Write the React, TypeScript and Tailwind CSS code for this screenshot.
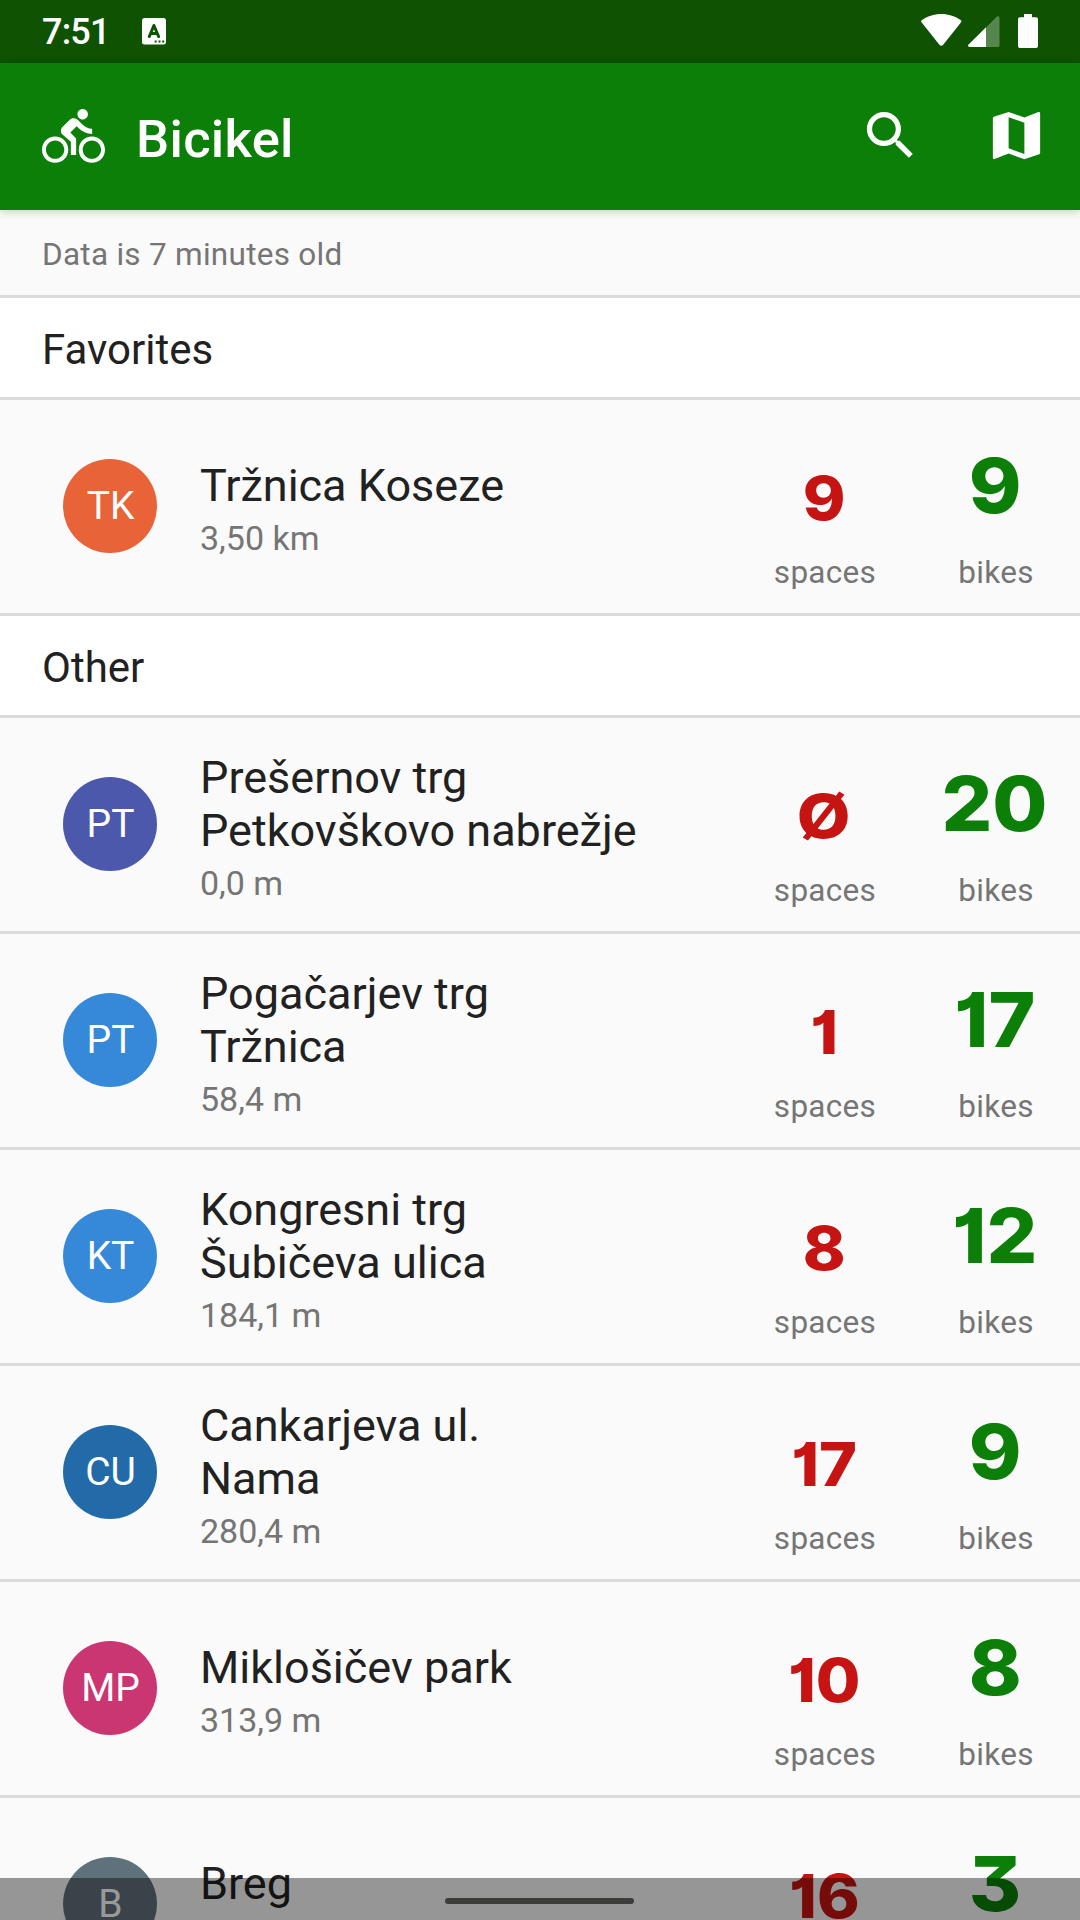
type Station = {
  initials: string;
  color: string;
  lines: string[];
  distance: string;
  spaces: string;
  bikes: string;
};

const favorites: Station[] = [
  { initials: 'TK', color: 'bg-[#e96338]', lines: ['Tržnica Koseze'], distance: '3,50 km', spaces: '9', bikes: '9' },
];

const others: Station[] = [
  { initials: 'PT', color: 'bg-[#4c58ab]', lines: ['Prešernov trg', 'Petkovškovo nabrežje'], distance: '0,0 m', spaces: 'Ø', bikes: '20' },
  { initials: 'PT', color: 'bg-[#3688d8]', lines: ['Pogačarjev trg', 'Tržnica'], distance: '58,4 m', spaces: '1', bikes: '17' },
  { initials: 'KT', color: 'bg-[#3688d8]', lines: ['Kongresni trg', 'Šubičeva ulica'], distance: '184,1 m', spaces: '8', bikes: '12' },
  { initials: 'CU', color: 'bg-[#226ba8]', lines: ['Cankarjeva ul.', 'Nama'], distance: '280,4 m', spaces: '17', bikes: '9' },
  { initials: 'MP', color: 'bg-[#ca3672]', lines: ['Miklošičev park'], distance: '313,9 m', spaces: '10', bikes: '8' },
  { initials: 'B', color: 'bg-[#5f717b]', lines: ['Breg'], distance: '402,6 m', spaces: '16', bikes: '3' },
];

function StatusBar() {
  return (
    <div className="flex h-[63px] items-start bg-[#0e5202] pl-[42px] pr-[42px] text-white">
      <span className="mt-[11px] w-[100px] text-[36px] leading-[42px] font-medium tracking-[-0.8px]">7:51</span>
      <svg className="mt-[18px] h-[27px] w-[24px]" viewBox="0 0 24 27">
        <rect width="24" height="26.5" rx="2.5" fill="#fff" />
        <path d="M7.3 18.5 11.9 7.5 16.6 18.5M8.6 15.6h6.6" fill="none" stroke="#0e5202" strokeWidth="3" strokeLinecap="round" strokeLinejoin="round" />
        <path d="M12.7 23.500h2M16.500 23.500h2M20.200 23.500h2" stroke="#0e5202" strokeWidth="2" />
      </svg>
      <div className="ml-auto flex items-start">
        <svg className="mt-[14px] h-[32px] w-[41px]" viewBox="0 0 41 32">
          <path d="M20.3 0C12.8 0 6.2 2.4 1 6.1c-1 .7-1 1.6-.3 2.5l17.700 22.200c1.100 1.400 2.700 1.400 3.800 0L39.900 8.600c.7-.9.7-1.800-.3-2.500C34.400 2.400 27.800 0 20.300 0Z" fill="#fff" />
        </svg>
        <svg className="mt-[16px] ml-[6px] h-[31px] w-[32px]" viewBox="0 0 32 31">
          <path d="M28.700.7C29.700-.3 31.500.2 31.500 2v27.500c0 .9-.6 1.500-1.500 1.500H18V11.400Z" fill="#fff" fillOpacity=".3" />
          <path d="M18 11.200V31H1.800C0 31-.5 29.700.6 28.600Z" fill="#fff" />
        </svg>
        <svg className="mt-[14px] ml-[18px] h-[34px] w-[20px]" viewBox="0 0 20 34">
          <path d="M6 0h8v3.300h4c1.200 0 2 .8 2 2V32c0 1.200-.8 2-2 2H2c-1.200 0-2-.8-2-2V5.300c0-1.200.8-2 2-2h4Z" fill="#fff" />
        </svg>
      </div>
    </div>
  );
}

function Toolbar() {
  return (
    <header className="relative z-10 flex h-[147px] items-start bg-[#0b7f08] pr-[32px] pl-[42px] text-white shadow-[0_2px_9px_rgba(0,0,0,0.18)]">
      <svg className="mt-[42px] h-[63px] w-[63px]" viewBox="0 0 24 24" fill="currentColor">
        <path d="M15.500 5.500c1.100 0 2-.9 2-2s-.9-2-2-2-2 .9-2 2 .9 2 2 2zM5 12c-2.800 0-5 2.200-5 5s2.200 5 5 5 5-2.200 5-5-2.200-5-5-5zm0 8.500c-1.900 0-3.500-1.600-3.500-3.500s1.600-3.500 3.500-3.500 3.500 1.600 3.500 3.500-1.600 3.500-3.500 3.500zm5.800-10l2.400-2.400.8.8c1.300 1.300 3 2.100 5.100 2.100V9c-1.500 0-2.700-.6-3.600-1.500l-1.900-1.900c-.5-.4-1-.6-1.600-.6s-1.100.2-1.400.6L7.800 8.400c-.4.4-.6.9-.6 1.400 0 .6.2 1.100.6 1.400L11 14v5h2v-6.200l-2.200-2.300zM19 12c-2.800 0-5 2.200-5 5s2.200 5 5 5 5-2.200 5-5-2.200-5-5-5zm0 8.500c-1.900 0-3.500-1.600-3.500-3.500s1.600-3.500 3.500-3.500 3.500 1.600 3.500 3.500-1.600 3.500-3.500 3.500z" />
      </svg>
      <h1 className="mt-[45px] ml-[31px] text-[52.5px] leading-[62px] font-medium tracking-[0.3px]">Bicikel</h1>
      <svg className="mt-[41px] ml-auto h-[63px] w-[63px]" viewBox="0 0 24 24" fill="currentColor">
        <path d="M15.500 14h-.79l-.28-.27C15.410 12.590 16 11.110 16 9.500 16 5.910 13.090 3 9.500 3S3 5.910 3 9.500 5.910 16 9.500 16c1.610 0 3.090-.59 4.230-1.570l.27.28v.79l5 4.990L20.490 19l-4.990-5zm-6 0C7.010 14 5 11.990 5 9.500S7.010 5 9.500 5 14 7.010 14 9.500 11.990 14 9.500 14z" />
      </svg>
      <svg className="mt-[41px] ml-[63px] h-[63px] w-[63px]" viewBox="0 0 24 24" fill="currentColor">
        <path d="M20.500 3l-.16.03L15 5.100 9 3 3.360 4.900c-.21.07-.36.25-.36.48V20.500c0 .28.22.5.5.5l.16-.03L9 18.900l6 2.100 5.640-1.900c.21-.07.36-.25.36-.48V3.500c0-.28-.22-.5-.5-.5zM15 19l-6-2.110V5l6 2.110V19z" />
      </svg>
    </header>
  );
}

function SectionTitle({ children }: { children: string }) {
  return (
    <h2 className="h-[102px] border-b-[3px] border-[#dbdbdb] bg-white pt-[27px] pl-[42px] text-[42px] leading-[49px] text-[#212121]">
      {children}
    </h2>
  );
}

function StationRow({ station }: { station: Station }) {
  const spacesWidth = station.spaces === 'Ø' ? 'scale-x-[1.14]' : 'scale-x-[1.06]';
  return (
    <li className="flex h-[216px] shrink-0 border-b-[3px] border-[#dbdbdb] pl-[63px]">
      <div className={`mt-[59px] flex h-[94px] w-[94px] items-center justify-center rounded-full pl-px text-[39px] text-white ${station.color}`}>
        {station.initials}
      </div>
      <div className="ml-[43px] flex w-[526px] flex-col justify-center pt-[4px]">
        {station.lines.map((line) => (
          <div key={line} className="text-[45px] leading-[53px] whitespace-nowrap text-[#212121]">{line}</div>
        ))}
        <div className="mt-[6px] text-[34px] leading-[40px] text-[#757575]">{station.distance}</div>
      </div>
      <div className="flex w-[198px] flex-col items-center">
        <div className={`mt-[60px] mr-[2px] h-[76px] text-[61px] leading-[76px] font-extrabold text-[#c51411] [font-family:Inter,sans-serif] [font-feature-settings:'cv09','cv01'] ${spacesWidth}`}>{station.spaces}</div>
        <div className="mt-[18px] text-[31.5px] leading-[37px] tracking-[0.3px] text-[#757575]">spaces</div>
      </div>
      <div className="flex w-[144px] flex-col items-center">
        <div className="mt-[38px] mr-[2px] h-[94px] scale-x-[1.05] text-[76px] leading-[94px] font-extrabold text-[#0b7f08] [font-family:Inter,sans-serif] [font-feature-settings:'cv09','cv01']">{station.bikes}</div>
        <div className="mt-[22px] text-[31.5px] leading-[37px] tracking-[0.3px] text-[#757575]">bikes</div>
      </div>
    </li>
  );
}

export default function App() {
  return (
    <div className="relative flex h-[1920px] w-[1080px] flex-col overflow-hidden bg-[#fafafa] [font-family:Roboto,sans-serif]">
      <StatusBar />
      <Toolbar />
      <p className="h-[88px] shrink-0 border-b-[3px] border-[#dbdbdb] pt-[26px] pl-[42px] text-[31.5px] leading-[37px] tracking-[0.27px] text-[#757575]">Data is 7 minutes old</p>
      <SectionTitle>Favorites</SectionTitle>
      <ul>
        {favorites.map((s) => (
          <StationRow key={s.lines[0]} station={s} />
        ))}
      </ul>
      <SectionTitle>Other</SectionTitle>
      <ul className="flex min-h-0 flex-1 flex-col overflow-hidden">
        {others.map((s) => (
          <StationRow key={s.lines[0]} station={s} />
        ))}
      </ul>
      <div className="absolute inset-x-0 bottom-0 flex h-[42px] justify-center bg-black/40 pt-[20px] pr-px">
        <div className="h-[6px] w-[189px] rounded-full bg-[#3c3c3a]" />
      </div>
    </div>
  );
}
